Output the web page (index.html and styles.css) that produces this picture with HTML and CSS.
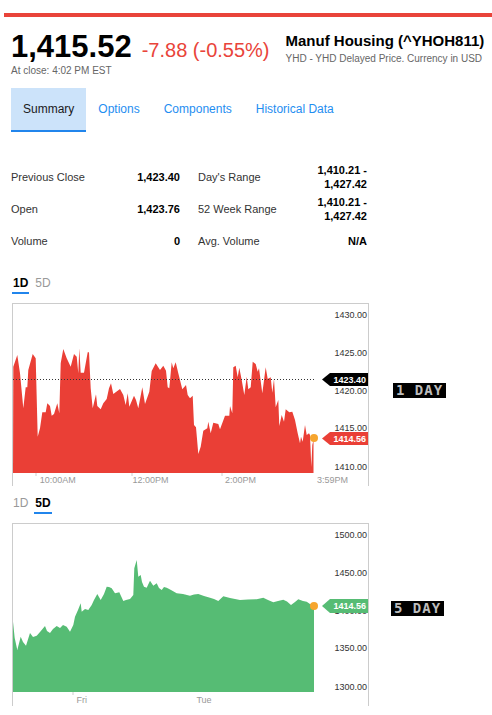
FILE: index.html
```html
<!DOCTYPE html>
<html lang="en">
<head>
<meta charset="utf-8">
<title>Manuf Housing (^YHOH811)</title>
<link rel="stylesheet" href="styles.css">
</head>
<body>
<div class="page">
  <div class="topbar"></div>

  <header class="quote-header">
    <div class="quote-price">
      <div class="price-line">
        <span class="price">1,415.52</span>
        <span class="change">-7.88 (-0.55%)</span>
      </div>
      <div class="close-time">At close: 4:02 PM EST</div>
    </div>
    <div class="quote-name">
      <h1 class="name">Manuf Housing (^YHOH811)</h1>
      <div class="source">YHD - YHD Delayed Price. Currency in USD</div>
    </div>
  </header>

  <nav class="tabs">
    <span class="tab active">Summary</span>
    <span class="tab">Options</span>
    <span class="tab">Components</span>
    <span class="tab">Historical Data</span>
  </nav>

  <div class="stats">
    <span class="stat-label">Previous Close</span>
    <span class="stat-value">1,423.40</span>
    <span class="stat-label right">Day's Range</span>
    <span class="stat-value">1,410.21 - 1,427.42</span>

    <span class="stat-label">Open</span>
    <span class="stat-value">1,423.76</span>
    <span class="stat-label right">52 Week Range</span>
    <span class="stat-value">1,410.21 - 1,427.42</span>

    <span class="stat-label">Volume</span>
    <span class="stat-value">0</span>
    <span class="stat-label right">Avg. Volume</span>
    <span class="stat-value">N/A</span>
  </div>

  <section class="chart-section first">
    <div class="period-tabs">
      <span class="period active">1D</span>
      <span class="period">5D</span>
    </div>
    <div class="chart-row">
      <div class="chart">
        <svg class="chart-svg" width="355" height="182" viewBox="0 0 355 182">
          <g transform="translate(-13,-304)">
            <path class="fill-red" d="M13,473 L13.3,366.7 L17.3,355 L20,373.3 L23.3,408.3 L25.7,387.3 L27.3,387.3 L28.3,370 L32.7,354 L35.7,358.3 L37.7,436.7 L40,428.3 L42.3,412.3 L45.7,412.3 L47.3,403.3 L50,406 L51.7,415.7 L54,414 L57.3,403.3 L59.3,413.3 L60.7,363.3 L63.3,349 L66.7,358.3 L70.7,366.7 L74,354 L76.7,356.7 L78.3,373.3 L79.3,348.3 L80.7,372.7 L84,372.7 L87.7,352.3 L89,352.3 L90.7,388.3 L92.7,408.3 L96,394.3 L97.3,406 L100.7,409.3 L103.3,403.3 L106.7,399 L109,388.3 L111,383.3 L113.3,394 L120,389 L123.3,395 L125.7,405 L127.7,393.3 L129.3,406.7 L134,395.7 L136,400 L138.3,408.3 L142.3,387.3 L145,404 L149.3,391.7 L151.7,371 L155.7,363.3 L160,370 L163.3,365.7 L166,370.7 L167.7,387.3 L169.3,388.3 L171.7,362.3 L173.3,368.3 L175.7,362.3 L178.3,373.3 L182.3,389.3 L186,385 L187.7,395 L190,398.3 L192.7,395.7 L194,425 L196,427.3 L198.3,454 L200.7,446.7 L203.3,430.7 L207.3,428.3 L208.3,421.7 L210.7,433.3 L213.3,422.7 L218.3,424 L220,429.3 L225,415.7 L229.3,415.7 L230,406 L232.3,413.3 L233.3,367.3 L235.7,365.7 L237.7,377.3 L239.3,367.7 L241.7,380 L244.3,395 L246.7,376.7 L248.3,389.3 L250.7,387.3 L252.7,361.7 L255.7,364 L257.7,371.7 L259,368.3 L262.3,393.3 L265.7,367.3 L267.7,379 L270.7,377.3 L272.3,392.7 L274,379 L275.7,407.3 L278.3,400 L279.3,426 L281.7,415 L284,421.7 L285.7,409.3 L289.3,412.3 L292.3,411.7 L295,420 L297.7,433.3 L300,443.3 L301,436.7 L302.7,441.7 L305,425 L306.7,435 L309,433.3 L310,435 L311.3,467 L312.3,445 L313.5,440 L313.5,473 Z"/>
            <line class="tick" x1="36" y1="473" x2="36" y2="476"/>
            <line class="tick" x1="132" y1="473" x2="132" y2="476"/>
            <line class="tick" x1="222" y1="473" x2="222" y2="476"/>
            <text class="x-label" x="57.7" y="483">10:00AM</text>
            <text class="x-label" x="150.5" y="483">12:00PM</text>
            <text class="x-label" x="240.5" y="483">2:00PM</text>
            <text class="x-label" x="332.5" y="483">3:59PM</text>
            <text class="y-label" x="367" y="318.3">1430.00</text>
            <text class="y-label" x="367" y="356">1425.00</text>
            <text class="y-label" x="367" y="394">1420.00</text>
            <text class="y-label" x="367" y="431.3">1415.00</text>
            <text class="y-label" x="367" y="470">1410.00</text>
            <line class="prev-close" x1="13" y1="379.5" x2="314" y2="379.5"/>
            <polygon class="tag-black" points="322,379.5 330,373 368,373 368,386 330,386"/>
            <text class="tag-text" x="366" y="382.8">1423.40</text>
            <polygon class="tag-red" points="322,438.5 330,432 368,432 368,445 330,445"/>
            <text class="tag-text" x="366" y="441.8">1414.56</text>
            <circle class="dot" cx="314" cy="438" r="4"/>
          </g>
        </svg>
      </div>
      <div class="badge badge-1d">1 DAY</div>
    </div>
  </section>

  <section class="chart-section second">
    <div class="period-tabs">
      <span class="period">1D</span>
      <span class="period active">5D</span>
    </div>
    <div class="chart-row">
      <div class="chart">
        <svg class="chart-svg" width="355" height="182" viewBox="0 0 355 182">
          <g transform="translate(-13,-524)">
            <path class="fill-green" d="M13,692 L13,621.7 L14.7,638 L17.3,650 L20.7,636.7 L23,642 L26,645.7 L30,633 L33,637 L36.7,635.7 L40,632 L45,626 L47,631 L50,633 L53,629 L56.7,626 L60,628 L63,625 L66.7,626.7 L70,631.7 L73.3,625 L75,616.7 L78,610 L80.7,603.3 L81.7,611.7 L85,609 L88.3,610 L91.7,605 L94,600 L97.3,594 L100.7,600 L104,594 L106.7,586.7 L109,587 L111.7,588.3 L115,593.3 L119.3,592.3 L121,596 L123.3,601 L126,600 L130,599 L133.3,595 L134.3,568.3 L136.7,560 L138.3,576.7 L140.7,575 L142,582 L144,586.7 L146.7,587.7 L150,580.7 L153.3,585.7 L156.7,583.3 L159,588 L161.7,590 L164,587 L166.7,587.7 L171,590 L176.7,593.3 L183,594 L190,595.7 L194,594.5 L198.3,594 L204,596 L210,597.7 L214,599 L218.3,601 L223.3,596.3 L230,598 L240,600 L248,599.5 L256.7,599.3 L263.3,597.7 L268,600 L273.3,602.3 L278,601 L283.3,599.7 L287,601.5 L291,605 L295,602 L298.3,599.3 L303,601 L306.7,601.7 L310,604 L314,605.7 L314,692 Z"/>
            <line class="tick" x1="73" y1="692" x2="73" y2="695"/>
            <text class="x-label" x="81.7" y="703">Fri</text>
            <text class="x-label" x="204" y="703">Tue</text>
            <text class="y-label" x="367" y="538.3">1500.00</text>
            <text class="y-label" x="367" y="576">1450.00</text>
            <text class="y-label" x="367" y="614">1400.00</text>
            <text class="y-label" x="367" y="651.3">1350.00</text>
            <text class="y-label" x="367" y="690">1300.00</text>
            <polygon class="tag-green" points="322,606 330,599 368,599 368,613 330,613"/>
            <text class="tag-text" x="366" y="609.3">1414.56</text>
            <circle class="dot" cx="314" cy="606" r="4"/>
          </g>
        </svg>
      </div>
      <div class="badge badge-5d">5 DAY</div>
    </div>
  </section>
</div>
</body>
</html>
```

FILE: styles.css
```css
body {
  margin: 0;
  background: #fff;
  color: #000;
  font-family: "Liberation Sans", Arial, sans-serif;
}

.page {
  width: 492px;
}

.topbar {
  height: 4px;
  margin: 13px 0 0 4px;
  background: #e9443a;
}

/* Header */
.quote-header {
  display: flex;
  gap: 16px;
  padding: 15px 0 0 11px;
}

.price-line {
  display: flex;
  align-items: baseline;
  gap: 10px;
  line-height: 30px;
}

.price {
  font-size: 31px;
  font-weight: bold;
}

.change {
  font-size: 20px;
  color: #e9443a;
}

.close-time {
  font-size: 10px;
  line-height: 12px;
  color: #666;
}

.name {
  margin: 0;
  font-size: 15px;
  line-height: 18px;
  font-weight: bold;
}

.source {
  margin-top: 3px;
  font-size: 10px;
  line-height: 12px;
  color: #666;
}

/* Tabs */
.tabs {
  display: flex;
  margin: 11px 0 0 11px;
}

.tab {
  height: 42px;
  display: flex;
  align-items: center;
  padding: 0 12px;
  font-size: 12px;
  color: #1f8ef1;
  border-bottom: 2px solid transparent;
}

.tab.active {
  background: #cce3fa;
  color: #1a1a1a;
  border-bottom-color: #2185ec;
}

/* Stats */
.stats {
  display: grid;
  grid-template-columns: 112px 57px 130px 57px;
  grid-auto-rows: 32px;
  align-items: center;
  margin: 29px 0 0 11px;
  font-size: 11px;
  line-height: 14px;
}

.stat-label {
  color: #333;
}

.stat-label.right {
  padding-left: 18px;
}

.stat-value {
  font-weight: bold;
  text-align: right;
}

/* Charts */
.chart-section.first {
  margin-top: 19px;
}

.chart-section.second {
  margin-top: 10px;
}

.period-tabs {
  display: flex;
  gap: 5px;
  padding-left: 12px;
  margin-bottom: 9px;
}

.period {
  padding: 0 1px 2px;
  font-size: 12px;
  line-height: 14px;
  color: #999;
  border-bottom: 2px solid transparent;
}

.period.active {
  color: #000;
  font-weight: bold;
  border-bottom-color: #2185ec;
}

.chart-row {
  display: flex;
  align-items: flex-start;
  padding-left: 12px;
}

.chart {
  width: 357px;
  height: 183px;
  box-sizing: border-box;
  border: 1px solid #ccc;
  border-bottom: 0;
}

.chart-svg {
  display: block;
  overflow: hidden;
}

.chart-svg text {
  font-family: "Liberation Sans", Arial, sans-serif;
  font-size: 9px;
}

.fill-red {
  fill: #ea3f36;
}

.fill-green {
  fill: #56bc74;
}

.tick {
  stroke: #ccc;
  stroke-width: 1;
}

.x-label {
  fill: #999;
  text-anchor: middle;
}

.y-label {
  fill: #333;
  text-anchor: end;
}

.prev-close {
  stroke: #333;
  stroke-width: 1;
  stroke-dasharray: 1 2;
}

.tag-black {
  fill: #000;
}

.tag-red {
  fill: #ea3f36;
}

.tag-green {
  fill: #56bc74;
}

.tag-text {
  fill: #fff;
  font-weight: bold;
  text-anchor: end;
}

.dot {
  fill: #f6a52e;
}

.badge {
  padding: 0 3px;
  background: #000;
  color: #bdbdbd;
  font-family: "DejaVu Sans Mono", monospace;
  font-weight: bold;
  font-size: 14px;
  line-height: 15px;
  letter-spacing: 1px;
  white-space: nowrap;
}

.badge-1d {
  margin: 80px 0 0 24px;
}

.badge-5d {
  margin: 78px 0 0 22px;
}
```
